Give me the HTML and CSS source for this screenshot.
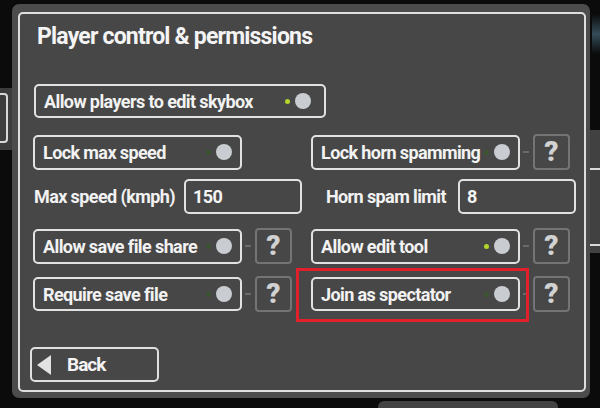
FILE: index.html
```html
<!DOCTYPE html>
<html lang="en">
<head>
    <meta charset="UTF-8">
    <meta name="viewport" content="width=device-width, initial-scale=1.0">
    <title>Player control &amp; permissions</title>
    <link rel="stylesheet" href="styles.css">
</head>
<body>
    <div class="behind behind-left"><div class="behind-box"></div></div>
    <div class="behind behind-right"></div>
    <div class="behind behind-glow"></div>
    <div class="behind behind-bottom"></div>

    <main class="panel">
        <div class="frame">
            <h1 class="title">Player control &amp; permissions</h1>

            <div class="toggle toggle-wide">
                <span class="toggle-label">Allow players to edit skybox</span>
                <i class="dot on"></i><i class="knob"></i>
            </div>

            <div class="row row-toggles first">
                <div class="opt">
                    <div class="toggle">
                        <span class="toggle-label">Lock max speed</span>
                        <i class="dot"></i><i class="knob"></i>
                    </div>
                </div>
                <div class="opt">
                    <div class="toggle">
                        <span class="toggle-label">Lock horn spamming</span>
                        <i class="dot"></i><i class="knob"></i>
                    </div>
                    <i class="link"></i>
                    <button class="help">?</button>
                </div>
            </div>

            <div class="row row-fields">
                <div class="field field-left">
                    <label for="maxSpeed">Max speed (kmph)</label>
                    <input type="text" id="maxSpeed" value="150">
                </div>
                <div class="field field-right">
                    <label for="hornLimit">Horn spam limit</label>
                    <input type="text" id="hornLimit" value="8">
                </div>
            </div>

            <div class="row row-toggles third">
                <div class="opt">
                    <div class="toggle">
                        <span class="toggle-label">Allow save file share</span>
                        <i class="dot"></i><i class="knob"></i>
                    </div>
                    <i class="link"></i>
                    <button class="help">?</button>
                </div>
                <div class="opt">
                    <div class="toggle">
                        <span class="toggle-label">Allow edit tool</span>
                        <i class="dot on"></i><i class="knob"></i>
                    </div>
                    <i class="link"></i>
                    <button class="help">?</button>
                </div>
            </div>

            <div class="row row-toggles fourth">
                <div class="opt">
                    <div class="toggle">
                        <span class="toggle-label">Require save file</span>
                        <i class="dot"></i><i class="knob"></i>
                    </div>
                    <i class="link"></i>
                    <button class="help">?</button>
                </div>
                <div class="opt">
                    <div class="toggle highlighted">
                        <span class="toggle-label">Join as spectator</span>
                        <i class="dot"></i><i class="knob"></i>
                    </div>
                    <i class="link"></i>
                    <button class="help">?</button>
                </div>
            </div>

            <button class="back"><i class="back-arrow"></i>Back</button>
        </div>
    </main>
</body>
</html>
```

FILE: styles.css
```css
body {
    margin: 0;
    width: 600px;
    height: 408px;
    overflow: hidden;
    position: relative;
    background: #0b0b0b;
    font-family: Roboto, "Noto Sans", sans-serif;
    color: #f2f2f2;
}

/* bits of the menus behind the panel */
.behind {
    position: absolute;
    background: #3d3d3d;
}
.behind-left {
    left: 0;
    top: 88px;
    width: 14px;
    height: 62px;
}
.behind-box {
    position: absolute;
    right: 6px;
    top: 5px;
    width: 20px;
    height: 46px;
    border: 2px solid #d8d8d8;
    border-left: none;
    border-radius: 0 4px 4px 0;
}
.behind-right {
    right: 0;
    top: 130px;
    width: 12px;
    height: 123px;
    background: #414141;
}
.behind-right::before,
.behind-right::after {
    content: "";
    position: absolute;
    left: 0;
    right: 0;
    height: 2px;
    background: #d8d8d8;
}
.behind-right::before { top: 38px; }
.behind-right::after { top: 114px; }
.behind-glow {
    right: 0;
    top: 14px;
    width: 8px;
    height: 40px;
    background: linear-gradient(180deg, rgba(70,110,130,0) 0%, rgba(80,120,140,0.6) 50%, rgba(70,110,130,0) 100%);
}
.behind-bottom {
    left: 378px;
    top: 401px;
    width: 180px;
    height: 12px;
    background: #434343;
    border-radius: 6px 6px 0 0;
}

.panel {
    position: relative;
    margin: 4px 0 0 12px;
    width: 578px;
    height: 394px;
    box-sizing: border-box;
    padding: 8px 4px 6px 6px;
    background: #4c4c4c;
    border-radius: 7px;
}
.frame {
    height: 100%;
    box-sizing: border-box;
    border: 2px solid #dedede;
    border-radius: 5px;
    background: #474747;
    padding: 10px 11px 0 13px;
}
.title {
    margin: 0 0 0 4px;
    font-size: 23px;
    line-height: 26px;
    font-weight: 700;
    letter-spacing: -0.8px;
    color: #f4f4f4;
}

.toggle {
    position: relative;
    display: flex;
    align-items: center;
    width: 209px;
    height: 35px;
    box-sizing: border-box;
    padding: 0 8px 0 8px;
    border: 2px solid #e2e2e2;
    border-radius: 5px;
    font-size: 18px;
    font-weight: 700;
    letter-spacing: -0.6px;
}
.toggle-wide {
    width: 292px;
    height: 34px;
    margin: 34px 0 0 1px;
    padding-right: 13px;
}
.toggle-label {
    flex: 1;
    white-space: nowrap;
}
.dot {
    width: 5px;
    height: 5px;
    margin-right: 5px;
    border-radius: 50%;
    background: #3b5530;
}
.dot.on {
    background: #b4d62a;
}
.knob {
    width: 16px;
    height: 16px;
    border-radius: 50%;
    background: #c9ccd1;
}
.highlighted::after {
    content: "";
    position: absolute;
    left: -17px;
    right: -11px;
    top: -11px;
    bottom: -13px;
    border: 3px solid #e2202b;
}

.row {
    display: flex;
    gap: 16px;
}
.row.first { margin-top: 16px; }
.row-fields { margin-top: 9px; gap: 10px; }
.row.third { margin-top: 14px; }
.row.fourth { margin-top: 12px; }
.row.fourth .toggle { height: 34px; }

.opt {
    display: flex;
    align-items: center;
    width: 262px;
}
.link {
    width: 6px;
    height: 2px;
    margin: 0 4px 0 3px;
    background: #6b6b6b;
}
.help {
    width: 37px;
    height: 36px;
    box-sizing: border-box;
    padding: 0;
    border: 2px solid #747474;
    border-radius: 4px;
    background: transparent;
    font-family: Roboto, "Noto Sans", sans-serif;
    font-size: 28px;
    font-weight: 900;
    line-height: 32px;
    color: #d2d2d2;
}

.field {
    display: flex;
    align-items: center;
    gap: 11px;
    font-size: 18px;
    font-weight: 700;
    letter-spacing: -0.6px;
}
.field label {
    text-align: right;
    white-space: nowrap;
}
.field-left label { width: 139px; text-align: left; padding-left: 1px; }
.field-right label { width: 134px; }
.field-right { gap: 12px; }
.field input {
    width: 118px;
    height: 35px;
    box-sizing: border-box;
    padding: 0 7px;
    border: 2px solid #e2e2e2;
    border-radius: 5px;
    background: transparent;
    font-family: inherit;
    font-size: 18px;
    font-weight: 700;
    letter-spacing: -0.6px;
    color: #f4f4f4;
}

.back {
    display: flex;
    align-items: center;
    width: 129px;
    height: 35px;
    margin: 35px 0 0 -3px;
    box-sizing: border-box;
    padding: 0 0 0 5px;
    border: 2px solid #e0e0e0;
    border-radius: 5px;
    background: transparent;
    font-family: Roboto, "Noto Sans", sans-serif;
    font-size: 19px;
    font-weight: 700;
    letter-spacing: -1px;
    color: #f4f4f4;
}
.back-arrow {
    width: 0;
    height: 0;
    margin-right: 16px;
    border-top: 10px solid transparent;
    border-bottom: 10px solid transparent;
    border-right: 14px solid #e2e2e2;
}
```
